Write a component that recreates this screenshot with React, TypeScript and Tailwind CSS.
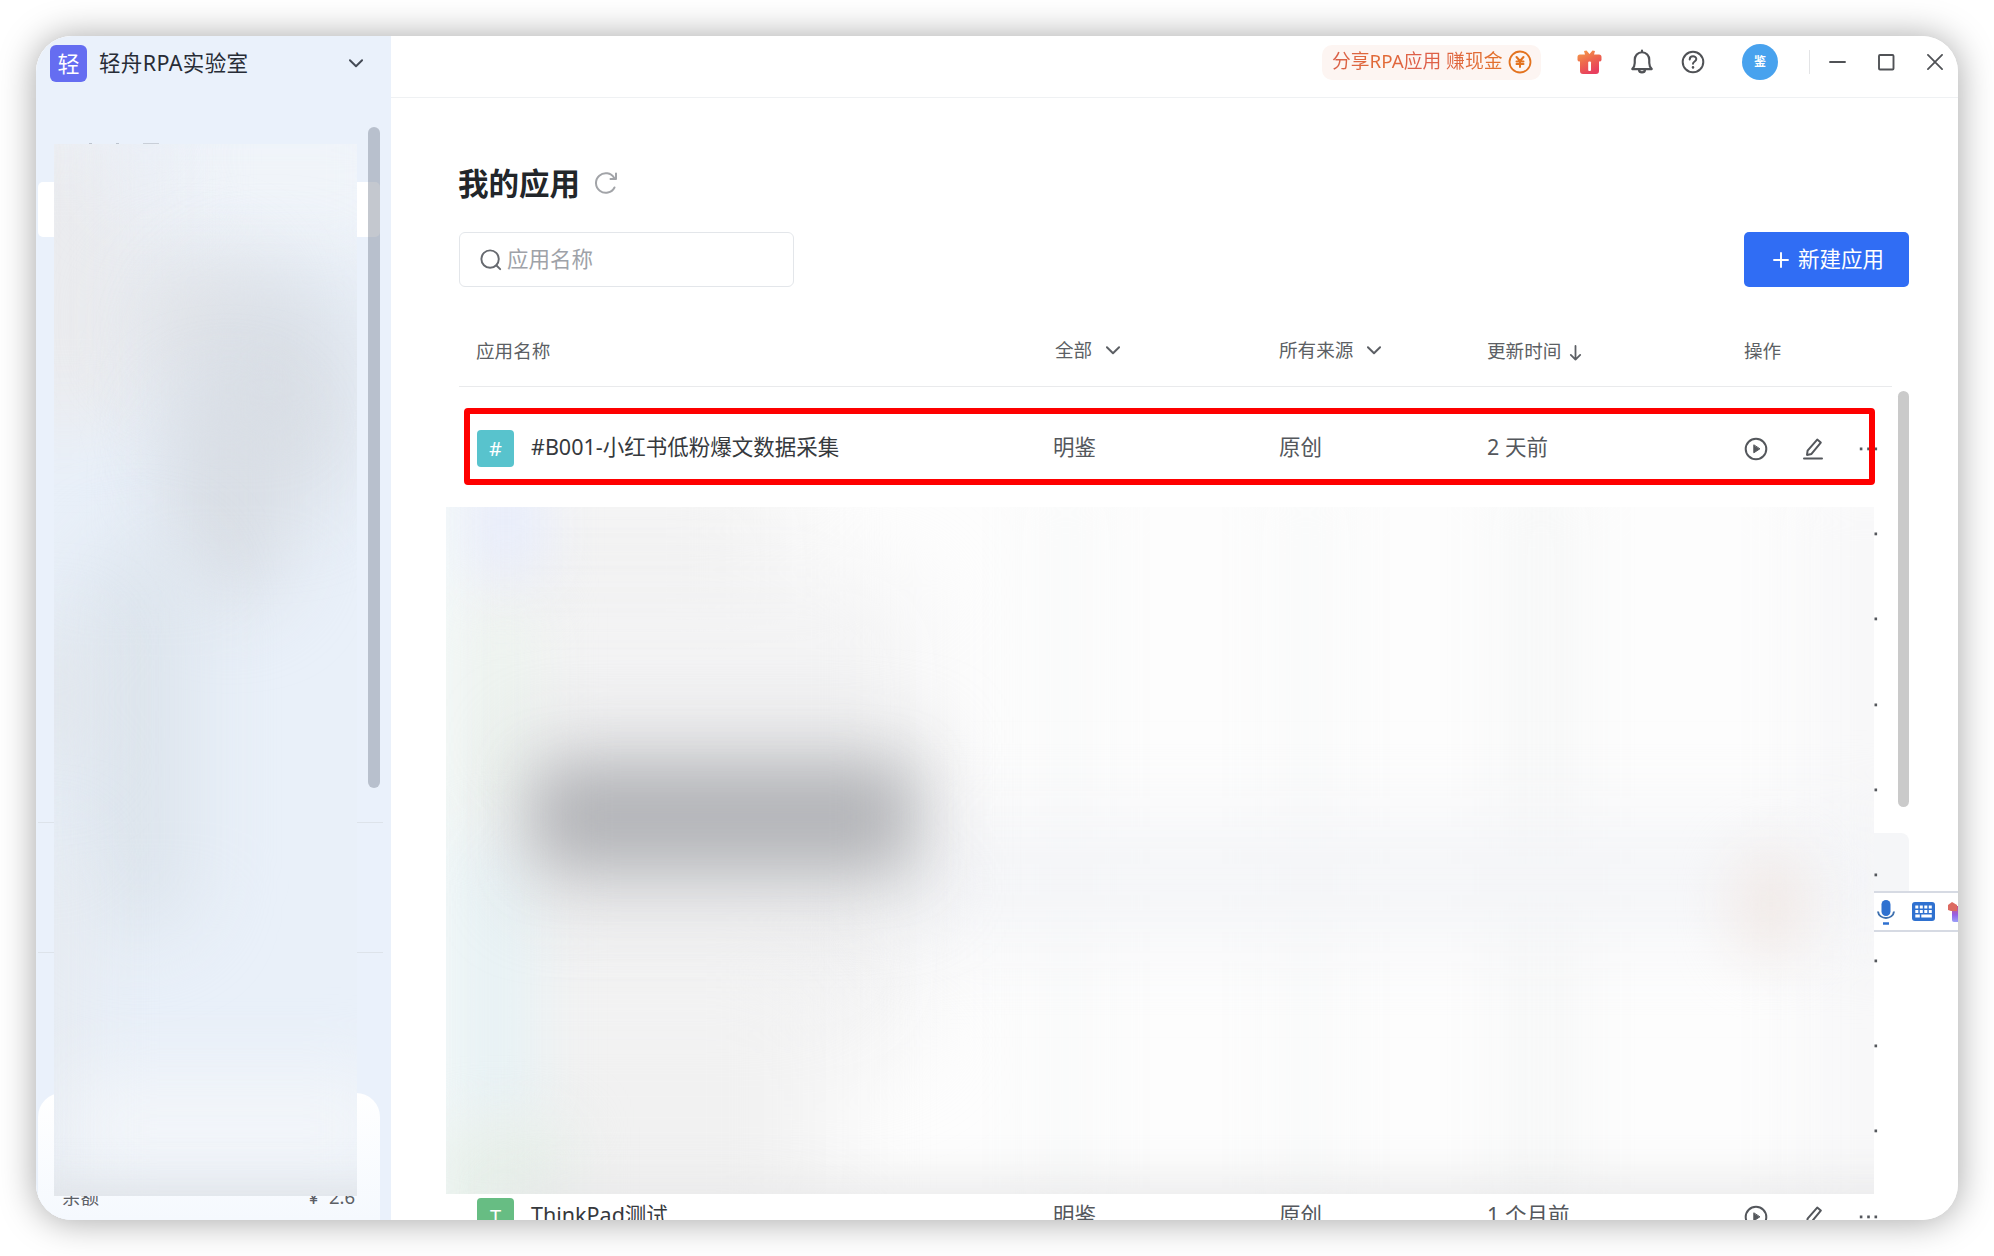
import React from "react";

function Svg({ className, children, box = "0 0 24 24", sw = 2 }: { className: string; children: React.ReactNode; box?: string; sw?: number }) {
  return (
    <svg className={"shrink-0 " + className} viewBox={box} fill="none" stroke="currentColor" strokeWidth={sw} strokeLinecap="round" strokeLinejoin="round">
      {children}
    </svg>
  );
}

function Chevron({ className }: { className: string }) {
  return (
    <Svg className={"h-[9px] w-[14px] " + className} box="0 0 15 9" sw={2.1}>
      <path d="M1 1l6.5 6.5L14 1" />
    </Svg>
  );
}

function Play() {
  return (
    <Svg className="h-6 w-6">
      <circle cx="12" cy="12" r="10.3" />
      <path d="M9.8 8.2v7.6l5.800-3.800z" fill="currentColor" strokeWidth="1" />
    </Svg>
  );
}

function Pen() {
  return (
    <Svg className="ml-[34px] h-6 w-[22px]" box="0 0 22 24">
      <path d="M15.2 2.6l3.6 3-9.3 11.3-4.5 1 .6-4.2z" />
      <path d="M2 21.6h18" />
    </Svg>
  );
}

function Dots() {
  return (
    <Svg className="h-1 w-[19px]" box="0 0 19 4">
      <g fill="currentColor" stroke="none">
        <rect x=".8" y=".5" width="2.6" height="2.8" />
        <rect x="8.200" y=".5" width="2.6" height="2.8" />
        <rect x="15.500" y=".5" width="2.6" height="2.8" />
      </g>
    </Svg>
  );
}

const columns = "grid grid-cols-[72px_523px_225px_208px_257px_1fr] items-center";

function AppRow({ letter, color, name, time }: { letter: string; color: string; name: string; time: string }) {
  return (
    <div className={columns + " h-[85.35px] shrink-0 text-[21.5px] leading-8 text-[#54575c]"}>
      <div className={"ml-[18px] flex h-[37px] w-[37px] items-center justify-center rounded-[4px] text-xl text-white " + color}>{letter}</div>
      <div className="-mt-1 text-[#36393d]">{name}</div>
      <div className="-ml-px -mt-1">明鉴</div>
      <div className="-mt-1">原创</div>
      <div className="-mt-1">{time}</div>
      <div className="flex items-center">
        <Play />
        <Pen />
        <span className="ml-[35px]"><Dots /></span>
      </div>
    </div>
  );
}

function HiddenRow({ active = false }: { active?: boolean }) {
  return (
    <div className={"flex h-[85.35px] shrink-0 items-center justify-end rounded-lg pr-[31px] text-[#54575c] " + (active ? "bg-[#f5f6f8]" : "")}>
      <Dots />
    </div>
  );
}

function Sidebar() {
  return (
    <aside className="relative flex w-[355px] shrink-0 flex-col bg-[#eaf1fb]">
      <div className="flex h-[54px] items-center pl-[14px] pr-7">
        <div className="flex h-[37px] w-[37px] items-center justify-center rounded-[6px] bg-[#656df1] text-[22px] leading-8 text-white">轻</div>
        <span className="ml-3 flex-1 text-[21.500px] leading-8 tracking-[0.35px] text-[#272c36]">轻舟RPA实验室</span>
        <Chevron className="text-[#454b56]" />
      </div>
      <div className="mt-[92px] ml-0.5 mr-[11px] h-[55px] rounded-[5px] bg-white" />
      <div className="mt-[585px] ml-0.5 mr-2 h-px bg-[#dde3ea]" />
      <div className="mt-[129px] ml-0.5 mr-2 h-px bg-[#dde3ea]" />
      <div className="mt-[140px] ml-0.5 mr-[11px] flex flex-1 items-end justify-between rounded-t-[24px] bg-gradient-to-b from-white to-[#f5f9fe] pb-[11px] pl-[24px] pr-[25px] text-[18.500px] leading-6 text-[#5c6066]">
        <span>余额</span>
        <span className="flex gap-2.5"><span>¥</span><span>2.6</span></span>
      </div>
      <div className="absolute left-[332px] top-[91px] h-[661px] w-[11.500px] rounded-full bg-[#7d8595]/45" />
      <div className="absolute left-[33px] top-[107px] flex w-[90px] gap-6 overflow-hidden">
        <span className="ml-5 h-px w-1 bg-[#bdc4ce]" />
        <span className="h-px w-1 bg-[#bdc4ce]" />
        <span className="h-px w-5 bg-[#c9cfd8]" />
      </div>
      <div className="absolute left-[18px] top-[108px] h-[1052px] w-[303px] overflow-hidden bg-[#e9f0f9]">
        <div className="absolute -left-10 -top-12 h-[160px] w-[400px] bg-[#f0f4f9] blur-2xl" />
        <div className="absolute -left-16 -top-2 h-[290px] w-[150px] bg-[#eaebee] blur-[36px]" />
        <div className="absolute left-[60px] -top-8 h-[90px] w-[60px] bg-[#e8edf7] blur-2xl" />
        <div className="absolute left-[70px] top-[110px] h-[130px] w-[140px] rounded-full bg-[#e4e6ea] blur-[36px]" />
        <div className="absolute left-[130px] top-[130px] h-[230px] w-[170px] rounded-full bg-[#d9dee5] blur-[44px]" />
        <div className="absolute left-[120px] top-[250px] h-[210px] w-[110px] rounded-full bg-[#d8dde4] blur-[40px]" />
        <div className="absolute left-[30px] top-[400px] h-[390px] w-[110px] rounded-full bg-[#dce4ec] blur-[40px]" />
        <div className="absolute -left-8 top-[490px] h-[130px] w-[60px] bg-[#dfe3e8] blur-2xl" />
        <div className="absolute -left-8 top-[700px] h-[380px] w-[50px] bg-[#e5e8ec] blur-2xl" />
        <div className="absolute left-4 top-[930px] h-[110px] w-[320px] bg-[#f2f5f9] blur-[36px]" />
        <div className="absolute -left-8 top-[1043px] h-[50px] w-[380px] bg-[#dfe2e6] blur-[20px]" />
      </div>
    </aside>
  );
}

function TopBar() {
  return (
    <header className="flex h-[62px] shrink-0 items-center border-b-[1.500px] border-[#eff1f3] pb-[9px] text-[#505256]">
      <div className="ml-[931px] flex h-[35px] w-[219px] items-center rounded-[10px] bg-[#fdf5f2] pl-[10px]">
        <span className="-mt-0.5 whitespace-nowrap bg-[linear-gradient(90deg,#d9604a,#e26b35_30%,#dd5d4c_52%,#e3722a)] bg-clip-text text-[18.800px] leading-7 text-transparent">分享RPA应用 赚现金</span>
        <Svg className="ml-1.5 h-6 w-6 text-[#e3731f]">
          <circle cx="12" cy="12" r="10.500" strokeWidth="1.800" />
          <path d="M8.500 7l3.500 4 3.500-4M8.500 11.500h7M8.500 14h7M12 11v6" strokeWidth="2" />
        </Svg>
      </div>
      <svg className="ml-[36px] h-[25px] w-[25px] shrink-0" viewBox="0 0 25 25">
        <defs>
          <linearGradient id="gift" x1="0" y1="0" x2=".5" y2="1">
            <stop offset="0" stopColor="#f5a04a" />
            <stop offset=".5" stopColor="#ee6a4c" />
            <stop offset="1" stopColor="#e83f5e" />
          </linearGradient>
        </defs>
        <path d="M7 1l2.500-.5L12.500 4l3-3.500L18 1l-1 3.500h5q2.500 0 2.500 2.500v3q0 1.500-2.500 1.500V21q0 3-3 3H6q-3 0-3-3v-9.500Q.5 11.500.5 10V7Q.5 4.500 3 4.500h5z" fill="url(#gift)" />
        <rect x="11.200" y="11.500" width="2.800" height="9.500" rx="1" fill="#fff" />
      </svg>
      <Svg className="ml-[27px] h-[26px] w-[26px]" sw={2}>
        <path d="M3 18.500h18c-1.600-1.600-2.300-3-2.300-5.500V10c0-4-2.700-7-6.700-7s-6.700 3-6.700 7v3c0 2.500-.7 3.900-2.300 5.500zM12 3V1.500M9.200 19c.2 3.500 5.400 3.500 5.600 0" />
      </Svg>
      <Svg className="ml-[26px] h-6 w-6" sw={2}>
        <circle cx="12" cy="12" r="10.300" />
        <path d="M8.700 9.500c.1-4.300 6.600-4 6.600-.4 0 2.400-3.300 2.400-3.300 4.700" />
        <path d="M12 17.300v.1" strokeWidth="2.500" />
      </Svg>
      <div className="ml-[37px] flex h-9 w-9 items-center justify-center rounded-full bg-[#48a2ee] text-[12px] font-bold leading-4 text-white">鉴</div>
      <div className="ml-[31px] h-6 w-px bg-[#e3e4e6]" />
      <Svg className="ml-[19px] h-[17px] w-[17px]" box="0 0 17 17" sw={1.900}><path d="M1 8h15" /></Svg>
      <Svg className="ml-8 h-[17px] w-[17px]" box="0 0 17 17" sw={1.900}><rect x="1" y="1" width="14.500" height="14.500" rx="1" /></Svg>
      <Svg className="ml-8 h-[16px] w-[16px]" box="0 0 17 17" sw={1.900}><path d="M1 1l15 15M16 1L1 16" /></Svg>
    </header>
  );
}

function RedactedArea() {
  return (
    <div className="absolute left-[55px] top-[471px] h-[687px] w-[1428px] overflow-hidden bg-[#fdfdfd]">
      <div className="absolute -left-10 -top-8 h-[190px] w-[380px] bg-[#f2f2f2] blur-[50px]" />
      <div className="absolute -left-10 top-[80px] h-[460px] w-[510px] bg-[#f2f2f3] blur-[50px]" />
      <div className="absolute -left-10 top-[470px] h-[260px] w-[420px] bg-[#f1f1f1] blur-[50px]" />
      <div className="absolute -left-16 -top-10 h-[800px] w-[90px] bg-[#f4f9f9] blur-[20px]" />
      <div className="absolute left-[20px] top-[100px] h-[220px] w-[70px] bg-[#ecf3ee] blur-[30px]" />
      <div className="absolute left-[20px] -top-10 h-[110px] w-[80px] bg-[#e8edfb] blur-[28px]" />
      <div className="absolute left-[10px] top-[330px] h-[290px] w-[80px] bg-[#e7f2f5] blur-[30px]" />
      <div className="absolute -left-2 top-[620px] h-[120px] w-[130px] bg-[#e6efe9] blur-[30px]" />
      <div className="absolute left-[590px] -top-8 h-[760px] w-[60px] bg-[#f9fafa] blur-[34px]" />
      <div className="absolute left-[830px] -top-8 h-[760px] w-[60px] bg-[#f9fafa] blur-[34px]" />
      <div className="absolute left-[1060px] -top-8 h-[760px] w-[70px] bg-[#f6f7f7] blur-[34px]" />
      <div className="absolute left-[1350px] -top-8 h-[760px] w-[140px] bg-[#f8f8f9] blur-[34px]" />
      <div className="absolute left-[440px] top-[320px] h-[105px] w-[1040px] bg-[#f3f4f7] blur-[44px]" />
      <div className="absolute left-[1290px] top-[345px] h-[105px] w-[70px] rounded-full bg-[#f1e9e6] blur-[28px]" />
      <div className="absolute left-[80px] top-[236px] h-[150px] w-[400px] bg-[#d4d5d7] blur-[40px]" />
      <div className="absolute left-[95px] top-[268px] h-[84px] w-[360px] bg-[#b2b3b7] blur-[30px]" />
      <div className="absolute left-[60px] top-[680px] h-[50px] w-[1500px] bg-[#e6e6e7] blur-[26px]" />
    </div>
  );
}

function InputToolbar() {
  return (
    <div className="absolute left-[1483px] top-[855px] flex h-[41px] w-[90px] items-center overflow-hidden border-y-2 border-[#d6dae3] bg-white">
      <svg className="ml-[3px] h-[26px] w-[18px] shrink-0" viewBox="0 0 18 26">
        <rect x="4.500" y="1" width="9" height="16" rx="4.500" fill="#2f71d0" />
        <path d="M1 12.500c1 8.500 15 8.500 16 0" fill="none" stroke="#3d6fae" strokeWidth="2" />
        <path d="M6 24.500h6" stroke="#2f71d0" strokeWidth="2.500" />
      </svg>
      <svg className="ml-[17px] h-[19px] w-[23px] shrink-0" viewBox="0 0 23 19">
        <rect width="23" height="19" rx="3" fill="#2f71d0" />
        <path d="M3.300 5h3m1.500 0h3m1.500 0h3m1.500 0h3M3.300 9.500h3m1.500 0h3m1.500 0h3m1.500 0h3M3.300 14h4.500m1.500 0h10.500" stroke="#fff" strokeWidth="2.900" />
      </svg>
      <svg className="ml-[13px] h-5 w-5 shrink-0" viewBox="0 0 20 20">
        <defs>
          <linearGradient id="shirt" x1="0" y1="0" x2="0" y2="1">
            <stop offset=".1" stopColor="#c8568c" />
            <stop offset=".55" stopColor="#9560e6" />
            <stop offset="1" stopColor="#9aa0f8" />
          </linearGradient>
        </defs>
        <path d="M4 4h16v16H6q-2 0-2-2z" fill="url(#shirt)" />
        <path d="M0 3l4-3 5 3v6H3L0 8z" fill="#dc6a61" />
      </svg>
    </div>
  );
}

export default function App() {
  return (
    <div className="h-[1256px] w-[1994px] overflow-hidden bg-white p-9 font-['Noto_Sans','Noto_Sans_CJK_SC',sans-serif]">
      <div className="flex h-[1184px] w-[1922px] rounded-[36px] shadow-[0_1px_36px_rgba(0,0,0,0.36)]">
        <div className="flex h-full w-full overflow-hidden rounded-[36px] bg-white">
          <Sidebar />
          <main className="relative flex min-w-0 flex-1 flex-col">
            <TopBar />
            <div className="mt-[63px] flex h-11 shrink-0 items-center pl-[67px]">
              <h1 className="text-[30.500px] font-bold leading-[44px] text-[#22262a]">我的应用</h1>
              <Svg className="ml-[14px] h-6 w-6 text-[#a2a4a8]" sw={2}>
                <path d="M20.500 16.500a9.800 9.800 0 1 1-.3-9.500" />
                <path d="M22 2.500V8h-5.500" />
              </Svg>
            </div>
            <div className="mt-[27px] flex shrink-0 items-center justify-between pl-[68px] pr-[49px]">
              <div className="flex h-[55px] w-[335px] items-center rounded-[6px] border-[1.500px] border-[#e3e6ea] pl-5">
                <Svg className="h-[22px] w-[22px] text-[#66696f]" sw={2.100}>
                  <circle cx="11" cy="11" r="9.500" />
                  <path d="M18 18l4 4" />
                </Svg>
                <span className="-mt-0.5 ml-[5px] text-[21.500px] leading-8 text-[#9ea2a8]">应用名称</span>
              </div>
              <button className="flex h-[55px] w-[165px] items-center rounded-[5px] bg-[#306df4] pl-[29px] text-[21.500px] leading-8 text-white">
                <Svg className="h-4 w-4" box="0 0 16 16" sw={1.900}><path d="M8 1v14M1 8h14" /></Svg>
                <span className="-mt-0.5 ml-[9px]">新建应用</span>
              </button>
            </div>
            <div className="mt-[36px] flex flex-col pl-[68px] pr-[49px]">
              <div className={columns + " mr-[17px] h-[64px] shrink-0 border-b-[1.500px] border-[#e9eaec] pb-[7px] text-[18.600px] leading-7 text-[#5c5f64]"}>
                <span className="col-span-2 ml-[17px]">应用名称</span>
                <span className="mb-0.5 ml-px flex items-center gap-[14px]"><span>全部</span><Chevron className="" /></span>
                <span className="mb-0.5 flex items-center gap-[14px]"><span>所有来源</span><Chevron className="" /></span>
                <span className="flex items-center gap-2">
                  <span>更新时间</span>
                  <Svg className="mt-1 h-4 w-[13px]" box="0 0 13 17" sw={1.900}><path d="M6.500 1v14.500M1.500 10.500l5 5 5-5" /></Svg>
                </span>
                <span>操作</span>
              </div>
              <div className="h-[19px] shrink-0" />
              <AppRow letter="#" color="bg-[#58c3cd]" name="#B001-小红书低粉爆文数据采集" time="2 天前" />
              <HiddenRow />
              <HiddenRow />
              <HiddenRow />
              <HiddenRow />
              <HiddenRow active />
              <HiddenRow />
              <HiddenRow />
              <HiddenRow />
              <AppRow letter="T" color="bg-[#67bd83]" name="ThinkPad测试" time="1 个月前" />
            </div>
            <div className="absolute left-[1507px] top-[355px] h-[416px] w-[11px] rounded-full bg-[#cacaca]" />
            <div className="absolute left-[73px] top-[371.500px] h-[77px] w-[1411px] rounded-[4px] border-[6px] border-[#fe0000]" />
            <RedactedArea />
            <InputToolbar />
          </main>
        </div>
      </div>
    </div>
  );
}
